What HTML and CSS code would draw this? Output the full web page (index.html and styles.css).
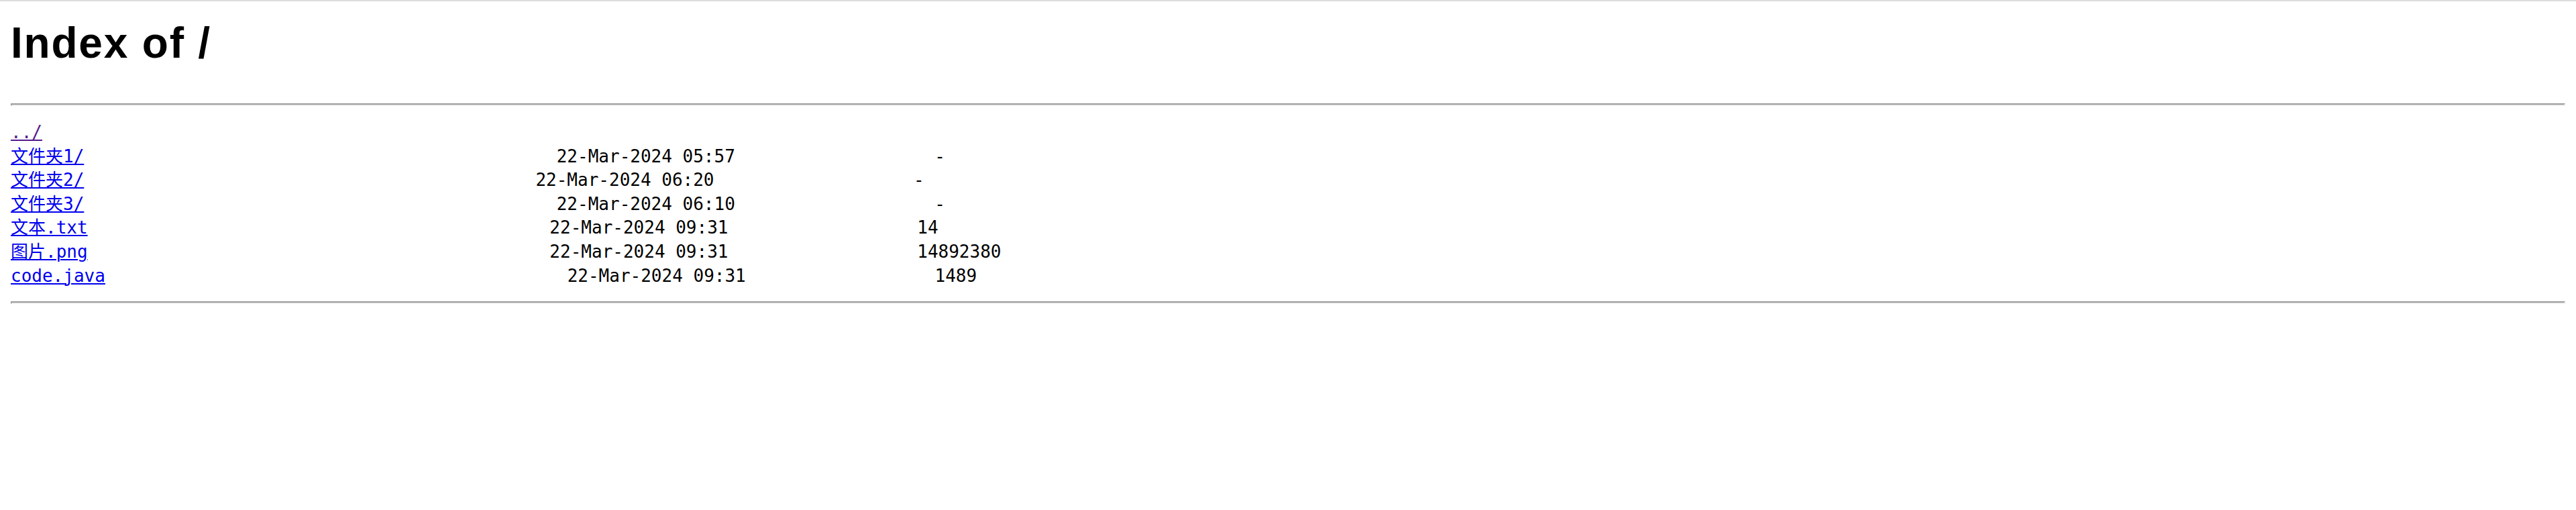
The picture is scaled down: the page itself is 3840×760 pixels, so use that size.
FILE: index.html
```html
<!DOCTYPE html>
<html lang="zh-CN">
<head>
<meta charset="utf-8">
<title>Index of /</title>
<link rel="stylesheet" href="styles.css">
</head>
<body class="page">
<h1 class="title">Index of /</h1>
<hr class="rule">
<pre class="listing"><a class="entry visited" href="../">../</a>
<a class="entry" href="%E6%96%87%E4%BB%B6%E5%A4%B91/">文件夹1/</a>                                             22-Mar-2024 05:57                   -
<a class="entry" href="%E6%96%87%E4%BB%B6%E5%A4%B92/">文件夹2/</a>                                           22-Mar-2024 06:20                   -
<a class="entry" href="%E6%96%87%E4%BB%B6%E5%A4%B93/">文件夹3/</a>                                             22-Mar-2024 06:10                   -
<a class="entry" href="%E6%96%87%E6%9C%AC.txt">文本.txt</a>                                            22-Mar-2024 09:31                  14
<a class="entry" href="%E5%9B%BE%E7%89%87.png">图片.png</a>                                            22-Mar-2024 09:31                  14892380
<a class="entry" href="code.java">code.java</a>                                            22-Mar-2024 09:31                  1489
</pre>
<hr class="rule">
</body>
</html>
```

FILE: styles.css
```css
html {
  border-top: 2px solid #dddddd;
  background: #ffffff;
}

.page {
  margin: 0 16px;
  color: #000000;
  font-family: "Liberation Sans", Arial, sans-serif;
}

.title {
  margin: 25px 0 53px;
  font-size: 64px;
  font-weight: bold;
  letter-spacing: 1.8px;
  line-height: normal;
}

.rule {
  height: 0;
  margin: 0;
  border-style: solid;
  border-width: 2px;
  border-color: #9a9a9a #eeeeee #eeeeee #9a9a9a;
}

.listing {
  margin: 22px 0 20px;
  font-family: "DejaVu Sans Mono", "Noto Sans CJK SC", monospace;
  font-size: 26px;
  line-height: 35.6px;
  color: #000000;
}

.entry {
  color: #0000ee;
  text-decoration: underline;
  text-decoration-thickness: 2px;
  text-underline-offset: 2px;
}

.entry.visited {
  color: #551a8b;
}
```
